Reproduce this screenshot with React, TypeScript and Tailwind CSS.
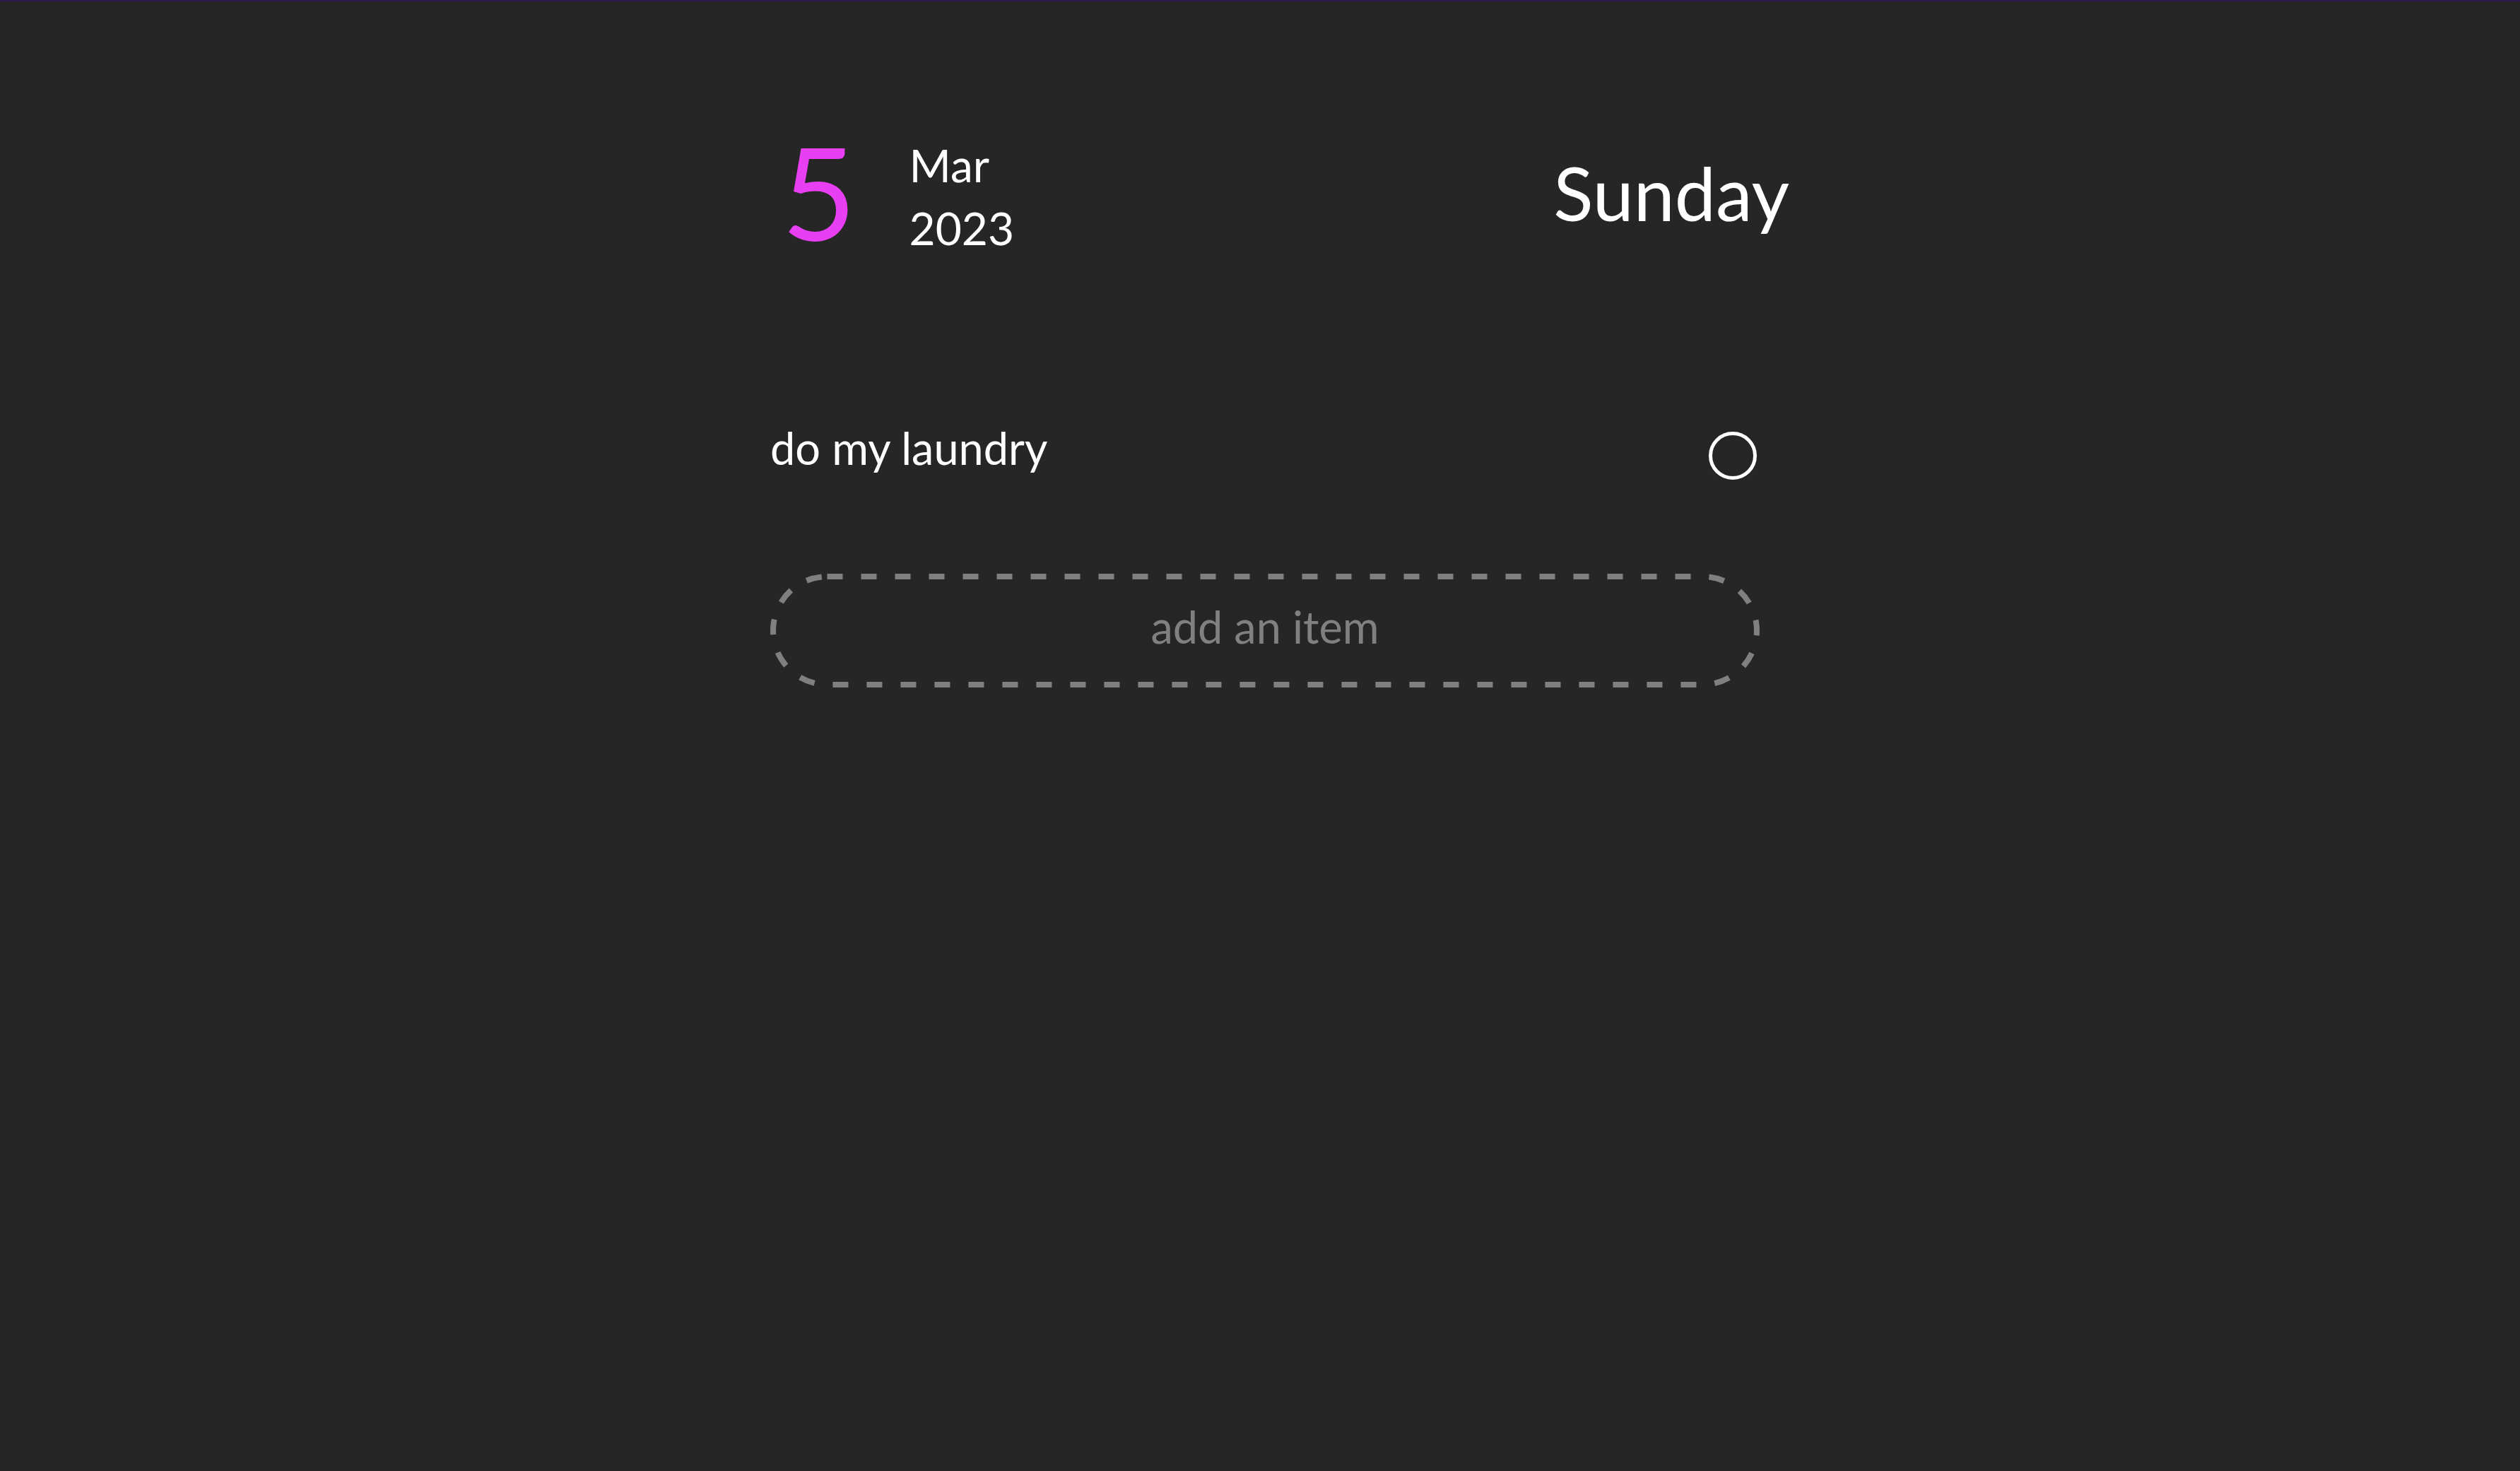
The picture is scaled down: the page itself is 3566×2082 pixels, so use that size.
export default function App() {
    return (
        <div className="min-h-screen w-full bg-[#262626] border-t-2 border-[#2c1a4d] font-['Lato',sans-serif] text-white">
            <div className="mx-auto w-[1414px] pl-[14px] pt-[177px]">
                {/* Date header */}
                <div className="flex items-start justify-between w-[1442px]">
                    <div className="flex items-start">
                        <div className="text-[182px] leading-none font-normal text-[#e83ff2] ml-[16px] mt-[1px]">5</div>
                        <div className="flex flex-col mt-[10px] ml-[75px] text-[64px] leading-[89px]">
                            <span>Mar</span>
                            <span>2023</span>
                        </div>
                    </div>
                    <div className="text-[104px] leading-none mt-[42px]">Sunday</div>
                </div>

                {/* Todo items */}
                <div className="mt-[222px] flex items-start justify-between w-[1400px]">
                    <span className="text-[63px] leading-[89px]">do my laundry</span>
                    <button className="mt-[22px] mr-[4px] w-[68px] h-[68px] rounded-full border-[5px] border-white" aria-label="complete" />
                </div>

                {/* Add item */}
                <div className="relative mt-[133px] w-[1400px] h-[161px] flex justify-center pt-[30px]">
                    <svg className="absolute inset-0" width="1400" height="161" viewBox="0 0 1400 161" fill="none">
                        <rect x="4" y="4" width="1392" height="153" rx="76.5" stroke="#808080" strokeWidth="8" strokeDasharray="22 26" />
                    </svg>
                    <span className="text-[63px] leading-[89px] text-[#808080]">add an item</span>
                </div>
            </div>
        </div>
    );
}
